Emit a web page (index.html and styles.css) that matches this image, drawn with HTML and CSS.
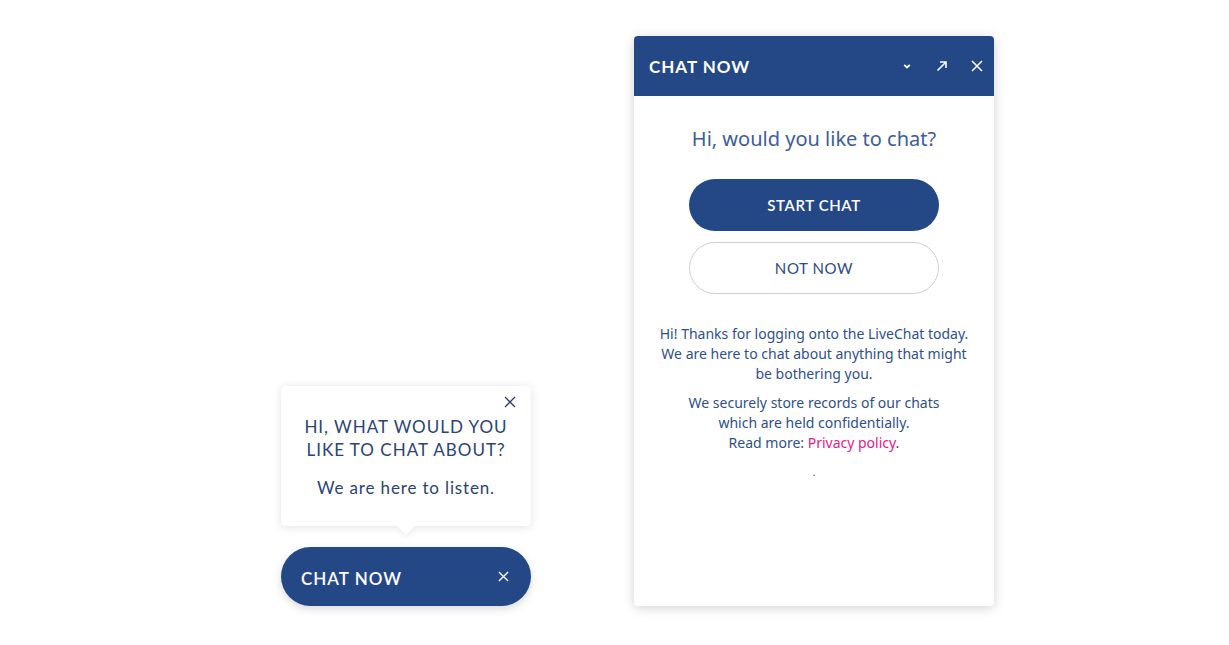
FILE: index.html
```html
<!DOCTYPE html>
<html>
<head>
<meta charset="utf-8">
<link rel="stylesheet" href="styles.css">
</head>
<body>
<div class="stage">
  <div class="launcher">
    <div class="bubble">
      <button class="bubble-close" aria-label="close">
        <svg viewBox="0 0 12 12" width="12" height="12"><path d="M1 1L11 11M11 1L1 11" stroke="#2b3f6b" stroke-width="1.3" fill="none"/></svg>
      </button>
      <div class="bubble-title">HI, WHAT WOULD YOU<br>LIKE TO CHAT ABOUT?</div>
      <div class="bubble-sub">We are here to listen.</div>
    </div>
    <div class="pill">
      <span class="pill-label">CHAT NOW</span>
      <svg class="pill-x" viewBox="0 0 12 12" width="11" height="11"><path d="M1 1L11 11M11 1L1 11" stroke="#fff" stroke-width="1.5" fill="none"/></svg>
    </div>
  </div>

  <div class="window">
    <div class="header">
      <span class="header-title">CHAT NOW</span>
      <div class="header-icons">
        <svg viewBox="0 0 12 12" width="12" height="12"><path d="M3.2 4.8L6 7.4L8.8 4.8" stroke="#fff" stroke-width="1.8" fill="none"/></svg>
        <svg viewBox="0 0 12 12" width="12" height="12"><path d="M1.5 10.5L10 2M4 2H10V8" stroke="#fff" stroke-width="1.6" fill="none"/></svg>
        <svg viewBox="0 0 12 12" width="12" height="12"><path d="M1 1L11 11M11 1L1 11" stroke="#fff" stroke-width="1.5" fill="none"/></svg>
      </div>
    </div>
    <div class="body">
      <h2 class="greet">Hi, would you like to chat?</h2>
      <button class="btn btn-primary">START CHAT</button>
      <button class="btn btn-outline">NOT NOW</button>
      <p class="info">Hi! Thanks for logging onto the LiveChat today.<br>We are here to chat about anything that might<br>be bothering you.</p>
      <p class="info second">We securely store records of our chats<br>which are held confidentially.<br>Read more: <a href="#" class="link">Privacy policy</a>.</p>
      <div class="dot">.</div>
    </div>
  </div>
</div>
</body>
</html>
```

FILE: styles.css
```css
* { box-sizing: border-box; }
html, body { margin: 0; padding: 0; background: #fff; }
body { font-family: "Noto Sans", "Open Sans", sans-serif; width: 1229px; height: 645px; overflow: hidden; }

.stage {
  display: flex;
  align-items: flex-end;
  gap: 103px;
  padding: 36px 0 0 281px;
}

.launcher {
  width: 250px;
  display: flex;
  flex-direction: column;
}

.bubble {
  position: relative;
  background: #fff;
  border-radius: 5px;
  box-shadow: 0 1px 10px rgba(0,0,0,0.12);
  height: 140px;
  padding-top: 29px;
  text-align: center;
  color: #2b4275;
}
.bubble::after {
  content: "";
  position: absolute;
  left: 116px;
  bottom: -9px;
  width: 0; height: 0;
  border-left: 9px solid transparent;
  border-right: 9px solid transparent;
  border-top: 9px solid #fff;
  filter: drop-shadow(0 3px 2px rgba(0,0,0,0.05));
}
.bubble-close {
  position: absolute;
  top: 10px;
  right: 15px;
  border: 0;
  background: none;
  padding: 0;
  line-height: 0;
}
.bubble-title {
  font-family: "Lato", sans-serif;
  font-size: 17px;
  line-height: 23px;
  letter-spacing: 1px;
}
.bubble-sub {
  font-family: "Lato", sans-serif;
  font-size: 17px;
  margin-top: 16px;
  letter-spacing: 0.85px;
}

.pill {
  margin-top: 21px;
  height: 59px;
  background: #244886;
  border-radius: 30px;
  display: flex;
  align-items: center;
  justify-content: space-between;
  padding: 3px 22px 0 20px;
  box-shadow: 0 3px 8px rgba(0,0,0,0.15);
}
.pill-label {
  color: #fff;
  font-family: "Lato", sans-serif;
  font-weight: 600;
  font-size: 17px;
  letter-spacing: 1px;
}
.pill-x { margin-top: -3px; }

.window {
  width: 360px;
  height: 570px;
  background: #fff;
  border-radius: 4px;
  overflow: hidden;
  box-shadow: 0 2px 12px rgba(0,0,0,0.18);
}
.header {
  height: 60px;
  background: #244886;
  display: flex;
  align-items: center;
  justify-content: space-between;
  padding: 0 11px 0 15px;
}
.header-title {
  color: #fff;
  font-family: "Lato", sans-serif;
  font-weight: 700;
  font-size: 17px;
  letter-spacing: 1px;
}
.header-icons {
  display: flex;
  gap: 23px;
  align-items: center;
}

.body {
  display: flex;
  flex-direction: column;
  align-items: center;
  padding-top: 30px;
}
.greet {
  margin: 0;
  font-weight: 400;
  font-size: 20px;
  color: #3e5c98;
  line-height: 26px;
}
.btn {
  width: 250px;
  height: 52px;
  border-radius: 26px;
  font-family: "Lato", sans-serif;
  font-size: 15px;
  letter-spacing: 0.6px;
  cursor: pointer;
}
.btn-primary {
  margin-top: 27px;
  background: #244886;
  color: #fff;
  border: 0;
  font-weight: 600;
}
.btn-outline {
  margin-top: 11px;
  background: #fff;
  color: #2b4a86;
  border: 1px solid #cfcfcf;
}
.info {
  margin: 30px 0 0;
  text-align: center;
  font-size: 14px;
  line-height: 20px;
  color: #2f4f8a;
}
.info.second { margin-top: 9px; }
.link { color: #e5178a; text-decoration: none; }
.dot { font-size: 10px; color: #2f4f8a; margin-top: 14px; line-height: 10px; }
```
